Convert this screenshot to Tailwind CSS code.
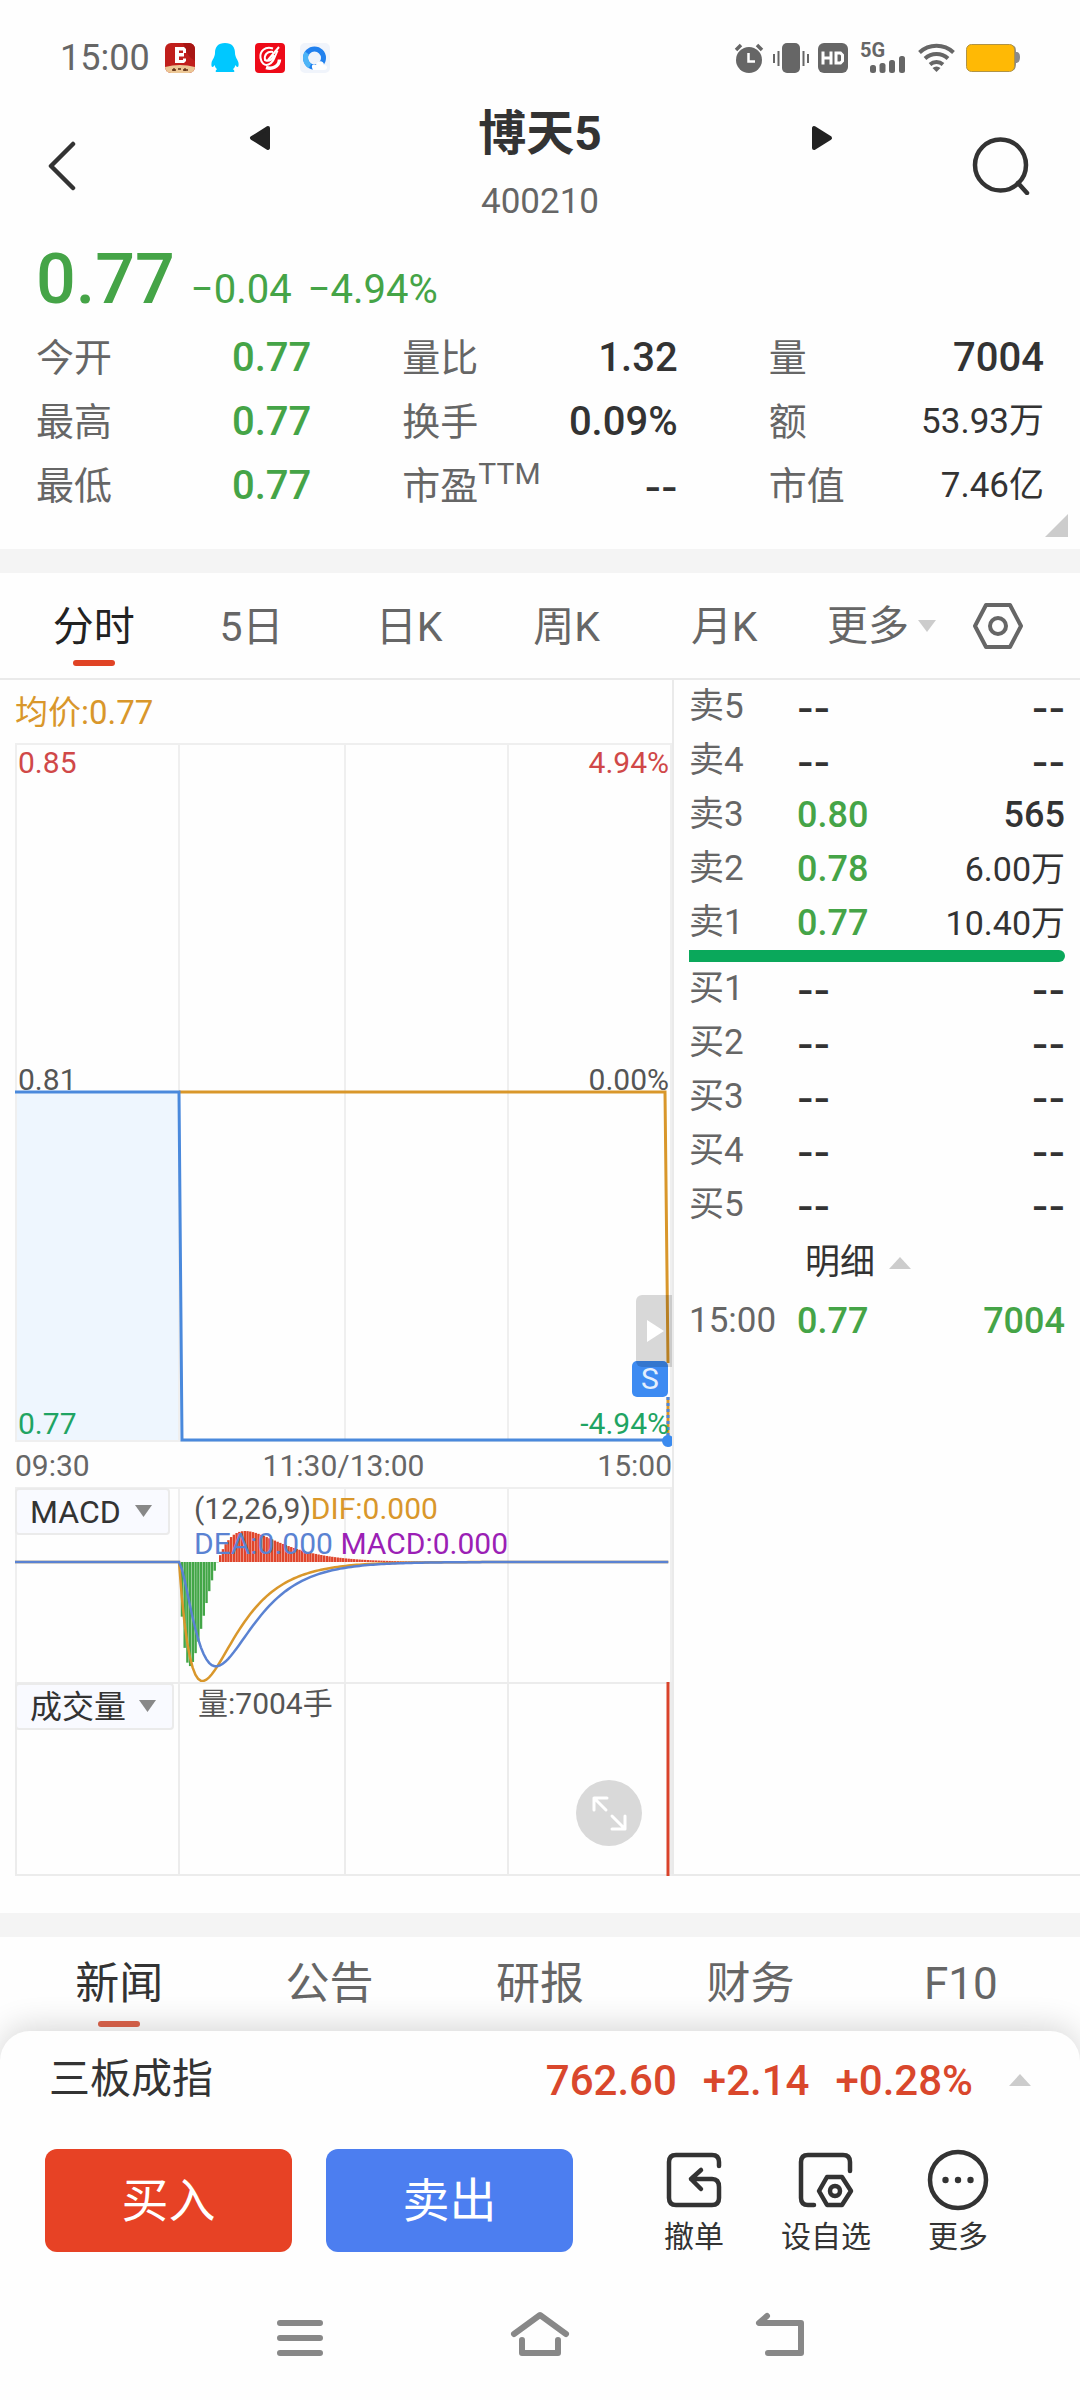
<!DOCTYPE html>
<html lang="zh-CN">
<head>
<meta charset="utf-8">
<meta name="viewport" content="width=device-width, initial-scale=1">
<title>博天5 400210</title>
<script src="https://cdn.jsdelivr.net/npm/@tailwindcss/browser@4"></script>
</head>
<body class="bg-[#fefefe] text-[#333] font-[Roboto,'Noto_Sans_CJK_SC',sans-serif]">
<div class="min-h-screen flex flex-col">

  <!-- Status bar -->
  <div class="h-[96px] pt-[20px] pl-[60px] pr-[60px] flex items-center justify-between text-[#666]">
    <div class="flex items-center gap-[15px]">
      <span class="text-[36px] leading-[40px]">15:00</span>
      <div class="flex items-center gap-[15px]">
        <svg class="size-[30px]" viewBox="0 0 30 30"><defs><clipPath id="a1"><rect width="30" height="30" rx="6"/></clipPath></defs><g clip-path="url(#a1)"><rect width="30" height="30" fill="#c01f1c"/><path d="M18 0q4 14 12 18V0z" fill="#a81614"/><path d="M0 24Q15 20 30 24V30H0Z" fill="#ecc795"/><path d="M10 4h9l2 2v4h-3V7.500h-4V10h5v3.500h-5v3.500h4v-1.500h3V18l-2 2h-9z" fill="#fff"/><path d="M7 27h4M9 25v3M13 26h3M18 27h5M20 25v3" stroke="#5a2b10" stroke-width="1.3"/></g></svg>
        <svg class="size-[30px]" viewBox="0 0 30 30" fill="#00c8ff"><path d="M15 0C8 0 5 4 5 10c0 4-3 7-3.500 10-.3 2 0 4 1 4 .8 0 1.500-1 2-2 .6 2 1.300 3 2.500 4.200C5.500 27 5 29 6.500 29h17c1.500 0 1-2-.5-2.800 1.200-1.200 1.900-2.200 2.500-4.200.5 1 1.200 2 2 2 1 0 1.300-2 1-4C28 17 25 14 25 10 25 4 22 0 15 0z"/></svg>
        <svg class="size-[30px]" viewBox="0 0 30 30"><rect width="30" height="30" rx="4" fill="#ee0a18"/><g fill="none" stroke="#fff" stroke-width="2"><path d="M18 5.500C10 3 4.500 8 5.500 15c.8 5 4 8 8 6.500 5-2 6-7 9-14"/><path d="M24 4 13 17M18 9c-6-1-9 3-8 8 4 2 8 0 9-5"/><path d="M11 24.500c6 2 13-.5 13.500-8" stroke-width="3.500"/></g></svg>
        <svg class="size-[30px]" viewBox="0 0 30 30"><rect width="30" height="30" rx="5" fill="#f0f4fb"/><circle cx="14.500" cy="15" r="9" fill="none" stroke="#2080ee" stroke-width="5"/><path d="M10 23C5 20 4.500 13 7 10" stroke="#4cb4f7" stroke-width="5" fill="none"/><path d="M13 27c-3-6 1-6 3-5 1-5 8-5 8 0 4 0 4 5 0 5z" fill="#fff"/></svg>
      </div>
    </div>
    <div class="flex items-center">
      <svg class="w-[30px] h-[30px]" viewBox="0 0 30 30"><circle cx="15" cy="17" r="13" fill="#666"/><path d="M2 7l5-5M28 7l-5-5" stroke="#666" stroke-width="3.500"/><path d="M14.500 10v8.500H21" fill="none" stroke="#fff" stroke-width="2.500"/></svg>
      <svg class="ml-[9px] w-[36px] h-[30px]" viewBox="0 0 36 30" fill="#666"><rect x="9" width="18" height="30" rx="5"/><rect x="4.500" y="8" width="2" height="15"/><rect y="11" width="2" height="9"/><rect x="29.500" y="8" width="2" height="15"/><rect x="34" y="11" width="2" height="9"/></svg>
      <svg class="ml-[9px] size-[30px]" viewBox="0 0 30 30"><rect width="30" height="30" rx="6" fill="#666"/><path d="M5 8.500v13M13 8.500v13M5 15h8" stroke="#fff" stroke-width="3" fill="none"/><path d="M18 10h4.500l2 2v6l-2 2H18z" stroke="#fff" stroke-width="3" fill="none"/></svg>
      <div class="relative ml-[12px] w-[46px] h-[30px]">
        <span class="absolute left-0 top-0 text-[20px] leading-[15px] font-bold">5G</span>
        <svg class="absolute right-0 bottom-0 w-[36px] h-[17px]" viewBox="0 0 36 17" fill="#666"><rect y="9" width="6" height="8" rx="2.500"/><rect x="9.500" y="7" width="6" height="10" rx="2.500"/><rect x="19" y="4" width="6" height="13" rx="2.500"/><rect x="29" width="6" height="17" rx="2.500"/></svg>
      </div>
      <svg class="ml-[12px] w-[37px] h-[30px]" viewBox="0 0 37 30" fill="none" stroke="#666" stroke-width="4"><path d="M1.500 9.500a25 25 0 0 1 34 0"/><path d="M7 15.500a17 17 0 0 1 23 0"/><path d="M12 21.500a10 10 0 0 1 13 0"/><path d="M18.500 29l-4-4a6 6 0 0 1 8 0z" fill="#666" stroke="none"/></svg>
      <svg class="ml-[11px] w-[54px] h-[28px]" viewBox="0 0 54 28"><path d="M44 1c5 0 6 2 6 7 3 0 4 2 4 5s-1 6-4 6c0 5-1 8-6 8z" fill="#8a8a8a"/><rect x=".5" y=".5" width="48" height="27" rx="5" fill="#ffb905" stroke="#b09345"/></svg>
    </div>
  </div>

  <!-- Title bar -->
  <header class="h-[134px] pl-[40px] pr-[48px] flex">
    <button class="mt-[45px] h-[50px] w-[44px]" aria-label="返回"><svg class="w-[44px] h-[50px]" viewBox="0 0 44 50" fill="none" stroke="#333" stroke-width="4.500" stroke-linecap="round" stroke-linejoin="round"><path d="M33 3 11 25 33 47"/></svg></button>
    <div class="grow pl-[162px] pr-[138px] flex justify-between">
      <button class="mt-[28px] h-[28px] w-[24px]" aria-label="上一只"><svg class="w-[24px] h-[28px]" viewBox="0 0 24 28"><path d="M22 4 6 14l16 10z" fill="#222" stroke="#222" stroke-width="4" stroke-linejoin="round"/></svg></button>
      <div class="text-center">
        <h1 class="mt-[7px] text-[48px] leading-[62px] font-bold">博天5</h1>
        <p class="mt-[13px] text-[35px] leading-[48px] text-[#666]">400210</p>
      </div>
      <button class="mt-[28px] h-[28px] w-[24px]" aria-label="下一只"><svg class="w-[24px] h-[28px]" viewBox="0 0 24 28"><path d="M4 4v20l16-10z" fill="#222" stroke="#222" stroke-width="4" stroke-linejoin="round"/></svg></button>
    </div>
    <button class="mt-[39px] size-[60px]" aria-label="搜索"><svg class="size-[60px]" viewBox="0 0 60 60" fill="none" stroke="#333" stroke-width="4.500" stroke-linecap="round"><circle cx="28.500" cy="30" r="25.500"/><path d="M46 48l9 10"/></svg></button>
  </header>

  <!-- Quote summary -->
  <section class="relative h-[319px] px-[36px]">
    <div class="flex items-baseline text-[#45a447] h-[96px]">
      <span class="text-[70px] leading-[98px] font-medium">0.77</span>
      <span class="ml-[16px] text-[40px]">−0.04</span>
      <span class="ml-[16px] text-[40px]">−4.94%</span>
    </div>
    <dl class="grid grid-cols-3 gap-x-[91px] text-[38px] leading-[64px] text-[#666]">
      <div class="flex justify-between"><dt>今开</dt><dd class="text-[40px] font-medium text-[#45a447]">0.77</dd></div>
      <div class="flex justify-between"><dt>量比</dt><dd class="text-[40px] font-medium text-[#333]">1.32</dd></div>
      <div class="flex justify-between"><dt>量</dt><dd class="text-[40px] font-medium text-[#333]">7004</dd></div>
      <div class="flex justify-between"><dt>最高</dt><dd class="text-[40px] font-medium text-[#45a447]">0.77</dd></div>
      <div class="flex justify-between"><dt>换手</dt><dd class="text-[40px] font-medium text-[#333]">0.09%</dd></div>
      <div class="flex justify-between"><dt>额</dt><dd class="text-[35px] text-[#333]">53.93万</dd></div>
      <div class="flex justify-between"><dt>最低</dt><dd class="text-[40px] font-medium text-[#45a447]">0.77</dd></div>
      <div class="flex justify-between"><dt class="flex">市盈<span class="text-[30px] leading-[40px]">TTM</span></dt><dd class="font-['DejaVu_Sans',sans-serif] text-[46px] text-[#333]">--</dd></div>
      <div class="flex justify-between"><dt>市值</dt><dd class="text-[35px] text-[#333]">7.46亿</dd></div>
    </dl>
    <svg class="absolute right-[12px] bottom-[12px] w-[23px] h-[23px]" viewBox="0 0 23 23"><path d="M23 0v23H0z" fill="#ccc"/></svg>
  </section>
  <div class="h-[24px] bg-[#f4f4f4]"></div>

  <!-- Period tabs -->
  <nav class="h-[107px] pl-[15px] border-b-2 border-[#eaeaea] flex text-[41px] leading-[108px] text-[#666]">
    <button class="relative w-[14.8%] text-[#222]">分时<span class="absolute left-1/2 -ml-[21px] bottom-[12px] w-[42px] h-[6px] rounded-full bg-[#e04325]"></span></button>
    <button class="w-[14.8%]">5日</button>
    <button class="w-[14.8%]">日K</button>
    <button class="w-[14.8%]">周K</button>
    <button class="w-[14.8%]">月K</button>
    <button class="ml-[24px] flex items-center gap-[9px]">更多<svg class="w-[18px] h-[12px]" viewBox="0 0 18 12"><path d="M0 0h18l-9 12z" fill="#ccc"/></svg></button>
    <button class="ml-[37px] self-center" aria-label="设置"><svg class="w-[50px] h-[46px]" viewBox="0 0 50 46" fill="none" stroke="#666" stroke-width="4" stroke-linejoin="round"><path d="M13 2h24l11 21-11 21H13L2 23z"/><circle cx="25" cy="23" r="8"/></svg></button>
  </nav>

  <!-- Chart and order book -->
  <main class="grid grid-cols-[674fr_406fr] h-[1196px]">
    <div class="border-r-2 border-[#eaeaea] pl-[15px]">
      <p class="h-[63px] pt-[8px] text-[33px] leading-[50px] text-[#d9972b]">均价:0.77</p>

      <div class="relative h-[699px] text-[30px] leading-[36px]">
        <svg class="absolute inset-0 size-full overflow-visible" viewBox="0 0 657 699" preserveAspectRatio="none">
          <rect x="0" y="349" width="164" height="348" fill="#eef6fe"/>
          <path d="M1 0V698H656V1H0M164 0V698M330 0V698M493 0V698" fill="none" stroke="#efefef" stroke-width="2"/>
          <path d="M164 349H650L653 620" fill="none" stroke="#d9972b" stroke-width="3"/>
          <path d="M653 654V697" stroke="#d9972b" stroke-width="3"/>
          <path d="M653 654V697" stroke="#4d86dc" stroke-width="3" stroke-dasharray="3 3"/>
          <path d="M0 349H164L167 697H653" fill="none" stroke="#4a89dc" stroke-width="3"/>
          <path d="M657 693.500A6 6 0 1 0 657 702.500z" fill="#3b8bef"/>
        </svg>
        <span class="absolute left-[3px] top-[2px] text-[#d04848]">0.85</span>
        <span class="absolute right-[3px] top-[2px] text-[#d04848]">4.94%</span>
        <span class="absolute left-[3px] top-[319px] text-[#555]">0.81</span>
        <span class="absolute right-[3px] top-[319px] text-[#555]">0.00%</span>
        <span class="absolute left-[3px] top-[663px] text-[#1fa463]">0.77</span>
        <span class="absolute right-[3px] top-[663px] text-[#1fa463]">-4.94%</span>
        <span class="absolute right-[4px] top-[618px] size-[36px] rounded-[5px] bg-[#3d8bf2] text-center text-[30px] text-[#e4effd]">S</span>
        <button class="absolute right-0 top-[552px] w-[36px] h-[72px] rounded-l-[6px] bg-black/15 pl-[11px]" aria-label="展开"><svg class="w-[17px] h-[22px]" viewBox="0 0 17 22"><path d="M0 0 17 11 0 22z" fill="#fff"/></svg></button>
      </div>

      <div class="h-[45px] grid grid-cols-3 text-[30px] leading-[47px] text-[#666]"><span>09:30</span><span class="text-center">11:30/13:00</span><span class="text-right">15:00</span></div>

      <div class="relative h-[195px] text-[30px] leading-[34px]">
        <svg class="absolute inset-0 size-full" viewBox="0 0 657 195" preserveAspectRatio="none">
          <path d="M1 195V1H656V195M164 0V195M330 0V195M493 0V195" fill="none" stroke="#efefef" stroke-width="2"/>
          <g id="macd-bars"></g>
          <path id="dif-line" fill="none" stroke="#d9972b" stroke-width="2.500"/>
          <path id="dea-line" fill="none" stroke="#5a82d2" stroke-width="2.500"/>
        </svg>
        <div class="absolute left-0 top-px w-[155px] h-[47px]">
          <select aria-label="指标" class="appearance-none w-full h-full pl-[13px] border-2 border-[#ebebeb] rounded-[4px] bg-[#f9faff] text-[32px] leading-[40px] text-[#333]"><option>MACD</option></select>
          <svg class="pointer-events-none absolute right-[18px] top-[17px] w-[17px] h-[12px]" viewBox="0 0 17 12"><path d="M0 0h17L8.500 12z" fill="#888"/></svg>
        </div>
        <p class="absolute left-[179px] top-[5px] whitespace-nowrap text-[#555]">(12,26,9)<span class="text-[#d9972b]">DIF:0.000</span></p>
        <p class="absolute left-[179px] top-[40px] whitespace-nowrap text-[#5a82d2]">DEA:0.000 <span class="text-[#9b1fb5]">MACD:0.000</span></p>
      </div>

      <div class="relative h-[194px] text-[30px] leading-[34px]">
        <svg class="absolute inset-0 size-full" viewBox="0 0 657 194" preserveAspectRatio="none">
          <path d="M1 0V193H656V1H0M164 0V193M330 0V193M493 0V193" fill="none" stroke="#ececec" stroke-width="2"/>
          <path d="M653 0V194" stroke="#d9432b" stroke-width="3"/>
        </svg>
        <div class="absolute left-0 top-px w-[159px] h-[47px]">
          <select aria-label="副图" class="appearance-none w-full h-full pl-[13px] border-2 border-[#ebebeb] rounded-[4px] bg-[#f9faff] text-[32px] leading-[40px] text-[#333]"><option>成交量</option></select>
          <svg class="pointer-events-none absolute right-[18px] top-[17px] w-[17px] h-[12px]" viewBox="0 0 17 12"><path d="M0 0h17L8.500 12z" fill="#888"/></svg>
        </div>
        <p class="absolute left-[183px] top-[5px] text-[#555]">量:7004手</p>
        <button class="absolute right-[30px] top-[98px] size-[66px] rounded-full bg-[#d9d9d9]" aria-label="全屏"><svg class="size-[66px]" viewBox="0 0 66 66" fill="none" stroke="#fff" stroke-width="3" stroke-linecap="round" stroke-linejoin="round"><path d="M30 30 18 18M18 30V18H31M36 36 49 49M49 36V49H36"/></svg></button>
      </div>
    </div>

    <!-- Five-level order book -->
    <div class="border-b-2 border-[#eaeaea] h-[1196px] pl-[15px] pr-[15px]">
      <table class="w-full text-[35px] leading-[54px] text-[#666]">
        <tbody id="asks"></tbody>
      </table>
      <div class="h-[12px] rounded-r-full bg-[#0aa85b]"></div>
      <table class="w-full text-[35px] leading-[54px] text-[#666]">
        <tbody id="bids"></tbody>
      </table>
      <button class="h-[62px] ml-[116px] flex items-center gap-[14px] text-[35px] text-[#333]">明细<svg class="w-[22px] h-[12px]" viewBox="0 0 22 12"><path d="M11 0 22 12H0z" fill="#ccc"/></svg></button>
      <table class="w-full text-[35px] leading-[50px] text-[#666]">
        <tbody id="ticks"></tbody>
      </table>
    </div>
  </main>

  <div class="h-[37px]"></div>
  <div class="h-[24px] bg-[#f4f4f4]"></div>

  <!-- Information tabs -->
  <nav class="h-[94px] px-[14px] grid grid-cols-5 text-[44px] leading-[90px] text-[#666]">
    <button class="relative text-[#333]">新闻<span class="absolute left-1/2 -ml-[21px] bottom-[4px] w-[42px] h-[6px] rounded-full bg-[#de644c]"></span></button>
    <button>公告</button>
    <button>研报</button>
    <button>财务</button>
    <button>F10</button>
  </nav>

  <!-- Index strip and trade actions -->
  <footer class="relative grow bg-[#fefefe] rounded-t-[30px] shadow-[0_-4px_32px_rgba(0,0,0,0.16)]">
    <div class="h-[98px] pl-[49px] pr-[49px] flex items-center text-[#333]">
      <span class="text-[41px]">三板成指</span>
      <span class="ml-auto text-[42px] font-medium text-[#d9472c]">762.60</span>
      <span class="ml-[26px] text-[42px] font-medium text-[#d9472c]">+2.14</span>
      <span class="ml-[26px] text-[42px] font-medium text-[#d9472c]">+0.28%</span>
      <svg class="ml-[36px] w-[22px] h-[12px]" viewBox="0 0 22 12"><path d="M11 0 22 12H0z" fill="#ccc"/></svg>
    </div>
    <div class="mt-[20px] pl-[45px] pr-[77px] flex">
      <button class="w-[247px] h-[103px] pt-[2px] rounded-[12px] bg-[#e74225] text-[47px] text-white">买入</button>
      <button class="ml-[34px] w-[247px] h-[103px] pt-[2px] rounded-[12px] bg-[#4c7ef0] text-[47px] text-white">卖出</button>
      <div class="ml-auto w-[354px] grid grid-cols-[90fr_174fr_90fr] text-[30px] leading-[40px] text-[#333]">
        <button class="flex flex-col items-center"><svg class="size-[62px]" viewBox="0 0 62 62" fill="none" stroke="#333" stroke-width="4.500" stroke-linecap="round" stroke-linejoin="round"><path d="M56 17V13Q56 6 49 6H13Q6 6 6 13V49Q6 56 13 56H49Q56 56 56 49V38Q56 30 49 30H28M38 21l-10 9 10 10"/></svg><span class="mt-[6px]">撤单</span></button>
        <button class="flex flex-col items-center"><svg class="size-[62px]" viewBox="0 0 62 62" fill="none" stroke="#333" stroke-width="4.500" stroke-linecap="round" stroke-linejoin="round"><path d="M55 22V13Q55 6 48 6H13Q6 6 6 13V49Q6 56 13 56H19M32 28H47L56 42 47 56H32L24 42z"/><circle cx="40" cy="42" r="5"/></svg><span class="mt-[6px]">设自选</span></button>
        <button class="flex flex-col items-center"><svg class="size-[62px]" viewBox="0 0 62 62" fill="none" stroke="#333" stroke-width="4.500"><circle cx="31" cy="31" r="28"/><g fill="#333" stroke="none"><circle cx="18.500" cy="31" r="3.200"/><circle cx="31" cy="31" r="3.200"/><circle cx="43.500" cy="31" r="3.200"/></g></svg><span class="mt-[6px]">更多</span></button>
      </div>
    </div>
    <div class="mt-[48px] px-[196px] pb-[38px] grid grid-cols-[208fr_272fr_208fr] text-[#888]">
      <button class="justify-self-center" aria-label="最近任务"><svg class="w-[60px] h-[60px]" viewBox="0 0 60 60" fill="none" stroke="#888" stroke-width="6" stroke-linecap="round"><path d="M10 18H50M10 33H50M10 48H50"/></svg></button>
      <button class="justify-self-center" aria-label="主页"><svg class="w-[60px] h-[60px]" viewBox="0 0 60 60" fill="none" stroke="#888" stroke-width="6" stroke-linecap="round" stroke-linejoin="round"><path d="M4 29 30 10 56 29M12 35V48H48V35"/></svg></button>
      <button class="justify-self-center" aria-label="后退"><svg class="w-[60px] h-[60px]" viewBox="0 0 60 60" fill="none" stroke="#888" stroke-width="6" stroke-linecap="round" stroke-linejoin="round"><path d="M17 11 9 18H51V48H18"/></svg></button>
    </div>
  </footer>
</div>

<script>
// MACD(12,26,9) of a single price step at minute 60 of 240
const STEP = 656 / 240, X0 = 164, ZERO = 75, SCALE = 428;
let dea = 0, dif = `M0 ${ZERO}H${X0}`, sig = dif, bars = '';
for (let n = 1; n <= 179; n++) {
  const d = Math.pow(11 / 13, n) - Math.pow(25 / 27, n);
  dea = dea * 0.8 + d * 0.2;
  const x = X0 + n * STEP, h = -2 * (d - dea) * SCALE;
  dif += `L${x} ${ZERO - d * SCALE}`;
  sig += `L${x} ${ZERO - dea * SCALE}`;
  bars += `<rect x="${x - 1}" y="${Math.min(ZERO, ZERO + h)}" width="2.400" height="${Math.abs(h)}" fill="${h > 0 ? '#43a647' : '#e0452b'}"/>`;
}
document.getElementById('dif-line').setAttribute('d', dif);
document.getElementById('dea-line').setAttribute('d', sig);
document.getElementById('macd-bars').innerHTML = bars;

// Order book rows
const GREEN = 'text-[36px] font-medium text-[#45a447]';
const DARK = 'text-[36px] font-medium text-[#333]';
const UNIT = 'text-[34px] text-[#333]';
const DASH = "font-['DejaVu_Sans',sans-serif] text-[46px] leading-[54px] text-[#333]";
const row = ([label, price, volume, cls]) => `<tr class="h-[54px]">
  <th class="w-[108px] p-0 text-left font-normal">${label}</th>
  <td class="p-0 ${price === '--' ? DASH : GREEN}">${price}</td>
  <td class="p-0 text-right ${cls || DASH}">${volume}</td></tr>`;
document.getElementById('asks').innerHTML = [
  ['卖5', '--', '--'], ['卖4', '--', '--'], ['卖3', '0.80', '565', DARK],
  ['卖2', '0.78', '6.00万', UNIT], ['卖1', '0.77', '10.40万', UNIT]].map(row).join('');
document.getElementById('bids').innerHTML = [1, 2, 3, 4, 5].map(i => row(['买' + i, '--', '--'])).join('');
document.getElementById('ticks').innerHTML = row(['15:00', '0.77', '7004', GREEN]);
</script>
</body>
</html>
